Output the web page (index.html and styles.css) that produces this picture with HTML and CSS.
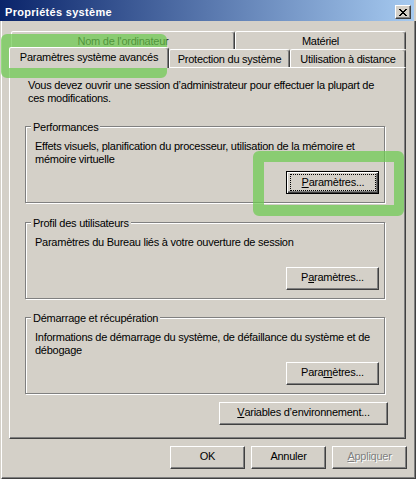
FILE: index.html
```html
<!DOCTYPE html>
<html lang="fr">
<head>
  <meta charset="UTF-8">
  <title>Propriétés système</title>
  <link rel="stylesheet" href="styles.css">
</head>
<body>
  <div class="window">
    <div class="titlebar">
      <span class="title">Propriétés système</span>
      <span class="close-btn">
        <svg width="8" height="7" viewBox="0 0 8 7" shape-rendering="crispEdges">
          <path d="M0 0h2v1H0zM6 0h2v1H6zM1 1h2v1H1zM5 1h2v1H5zM2 2h4v1H2zM3 3h2v1H3zM2 4h4v1H2zM1 5h2v1H1zM5 5h2v1H5zM0 6h2v1H0zM6 6h2v1H6z" fill="#000"/>
        </svg>
      </span>
    </div>

    <div class="client">
      <div class="tabs">
        <div class="tab-row">
          <div class="tab tab-name">Nom de l'ordinateur</div>
          <div class="tab tab-hardware">Matériel</div>
        </div>
        <div class="tab-row">
          <div class="tab tab-advanced active">Paramètres système avancés</div>
          <div class="tab tab-protection">Protection du système</div>
          <div class="tab tab-remote">Utilisation à distance</div>
        </div>
      </div>

      <div class="panel">
        <p class="intro">Vous devez ouvrir une session d’administrateur pour effectuer la plupart de<br>ces modifications.</p>

        <div class="group group-perf">
          <div class="legend">Performances</div>
          <p class="desc">Effets visuels, planification du processeur, utilisation de la mémoire et<br>mémoire virtuelle</p>
          <div class="btn btn-settings default"><span class="focus"><u>P</u>aramètres...</span></div>
        </div>

        <div class="group group-profile">
          <div class="legend">Profil des utilisateurs</div>
          <p class="desc">Paramètres du Bureau liés à votre ouverture de session</p>
          <div class="btn btn-settings">P<u>a</u>ramètres...</div>
        </div>

        <div class="group group-startup">
          <div class="legend">Démarrage et récupération</div>
          <p class="desc">Informations de démarrage du système, de défaillance du système et de<br>débogage</p>
          <div class="btn btn-settings">Para<u>m</u>ètres...</div>
        </div>

        <div class="btn btn-env"><u>V</u>ariables d’environnement...</div>
      </div>

      <div class="actions">
        <div class="btn btn-action">OK</div>
        <div class="btn btn-action">Annuler</div>
        <div class="btn btn-action disabled"><u>A</u>ppliquer</div>
      </div>
    </div>

    <!-- green callouts drawn over the dialog -->
    <div class="highlight hl-tab"></div>
    <div class="highlight hl-btn"></div>
  </div>
</body>
</html>
```

FILE: styles.css
```css
* {
  box-sizing: border-box;
}

body {
  margin: 0;
  background: #d4d0c8;
  font: 11px/13px "Liberation Sans", Arial, sans-serif;
  letter-spacing: -0.25px;
  color: #000;
}

p {
  margin: 0;
  white-space: nowrap;
}

u {
  text-decoration: underline;
  text-underline-offset: 1px;
}

.window {
  position: relative;
  width: 416px;
  height: 479px;
  display: flex;
  flex-direction: column;
  overflow: hidden;
}

/* Title bar */
.titlebar {
  width: 414px;
  height: 21px;
  flex-shrink: 0;
  display: flex;
  align-items: flex-start;
  justify-content: space-between;
  padding: 0 3px 0 5px;
  background: linear-gradient(to right, #0a246a, #a6caf0);
}

.title {
  padding-top: 6px;
  color: #fff;
  font-weight: bold;
  letter-spacing: 0.3px;
}

.close-btn {
  width: 16px;
  height: 14px;
  margin-top: 5px;
  display: flex;
  align-items: center;
  justify-content: center;
  background: #d4d0c8;
  border: 1px solid;
  border-color: #fff #404040 #404040 #fff;
  box-shadow: inset -1px -1px 0 #808080;
}

/* Window body */
.client {
  flex: 1;
  margin-left: 1px;
  border-left: 1px solid #fff;
  border-right: 1px solid #404040;
  border-bottom: 1px solid #404040;
  box-shadow: inset -1px -1px 0 #808080;
  padding: 10px 9px 0 7px;
  display: flex;
  flex-direction: column;
}

/* Tabs */
.tabs {
  padding-left: 2px;
}

.tab-row {
  display: flex;
  align-items: flex-start;
  height: 18px;
}

.tab {
  height: 18px;
  padding-top: 3px;
  text-align: center;
  white-space: nowrap;
  background: #d4d0c8;
  border: 1px solid;
  border-bottom: 0;
  border-color: #fff #404040 transparent #fff;
  border-radius: 2px 3px 0 0;
  box-shadow: inset -1px 0 0 #808080;
}

.tab-name { width: 224px; }
.tab-hardware { width: 171px; }
.tab-advanced { width: 158px; }
.tab-protection { width: 121px; }
.tab-remote { width: 116px; }

.tab.active {
  position: relative;
  z-index: 1;
  height: 21px;
  margin-top: -2px;
  margin-bottom: -1px;
  margin-left: -2px;
  width: 160px;
}

/* Tab page */
.panel {
  height: 372px;
  flex-shrink: 0;
  border: 1px solid;
  border-color: #fff #404040 #404040 #fff;
  box-shadow: inset -1px -1px 0 #808080;
  padding: 11px 17px 0 15px;
  display: flex;
  flex-direction: column;
}

.intro {
  margin-left: 3px;
}

.group {
  width: 360px;
  height: 77px;
  flex-shrink: 0;
  border: 1px solid #808080;
  box-shadow: inset 1px 1px 0 #fff, 1px 1px 0 #fff;
  padding: 0 5px 8px 9px;
  display: flex;
  flex-direction: column;
}

.group-perf { margin-top: 21px; }
.group-profile { margin-top: 19px; }
.group-startup { margin-top: 18px; }

.legend {
  align-self: flex-start;
  margin: -6px 0 0 -4px;
  padding: 0 2px;
  background: #d4d0c8;
}

.desc {
  margin-top: 6px;
}

/* Buttons */
.btn {
  height: 23px;
  flex-shrink: 0;
  display: flex;
  align-items: center;
  justify-content: center;
  padding-bottom: 2px;
  white-space: nowrap;
  background: #d4d0c8;
  border: 1px solid;
  border-color: #fff #404040 #404040 #fff;
  box-shadow: inset -1px -1px 0 #808080;
}

.btn-settings {
  width: 93px;
  margin-top: auto;
  align-self: flex-end;
}

.btn.default {
  border-color: #000;
  box-shadow: inset 1px 1px 0 #fff, inset -1px -1px 0 #404040, inset -2px -2px 0 #808080;
  padding: 0;
  align-items: stretch;
}

.focus {
  flex: 1;
  margin: 2px 2px 2px 3px;
  border: 1px dotted #000;
  display: flex;
  align-items: center;
  justify-content: center;
  padding-bottom: 1px;
}

.btn-env {
  width: 169px;
  margin-top: 8px;
  align-self: flex-end;
}

.actions {
  margin-top: 7px;
  margin-right: -1px;
  display: flex;
  justify-content: flex-end;
  gap: 6px;
}

.btn-action {
  width: 75px;
}

.btn.disabled {
  color: #808080;
  text-shadow: 1px 1px 0 #fff;
}

/* Green callouts */
.highlight {
  position: absolute;
  border-style: solid;
  border-color: rgba(109, 202, 80, 0.72);
  border-radius: 6px;
  pointer-events: none;
}

.hl-tab {
  left: 1px;
  top: 34px;
  width: 166px;
  height: 44px;
  border-width: 13px 10px 10px 12px;
}

.hl-btn {
  left: 253px;
  top: 151px;
  width: 151px;
  height: 65px;
  border-width: 11px 10px 11px 11px;
}
```
